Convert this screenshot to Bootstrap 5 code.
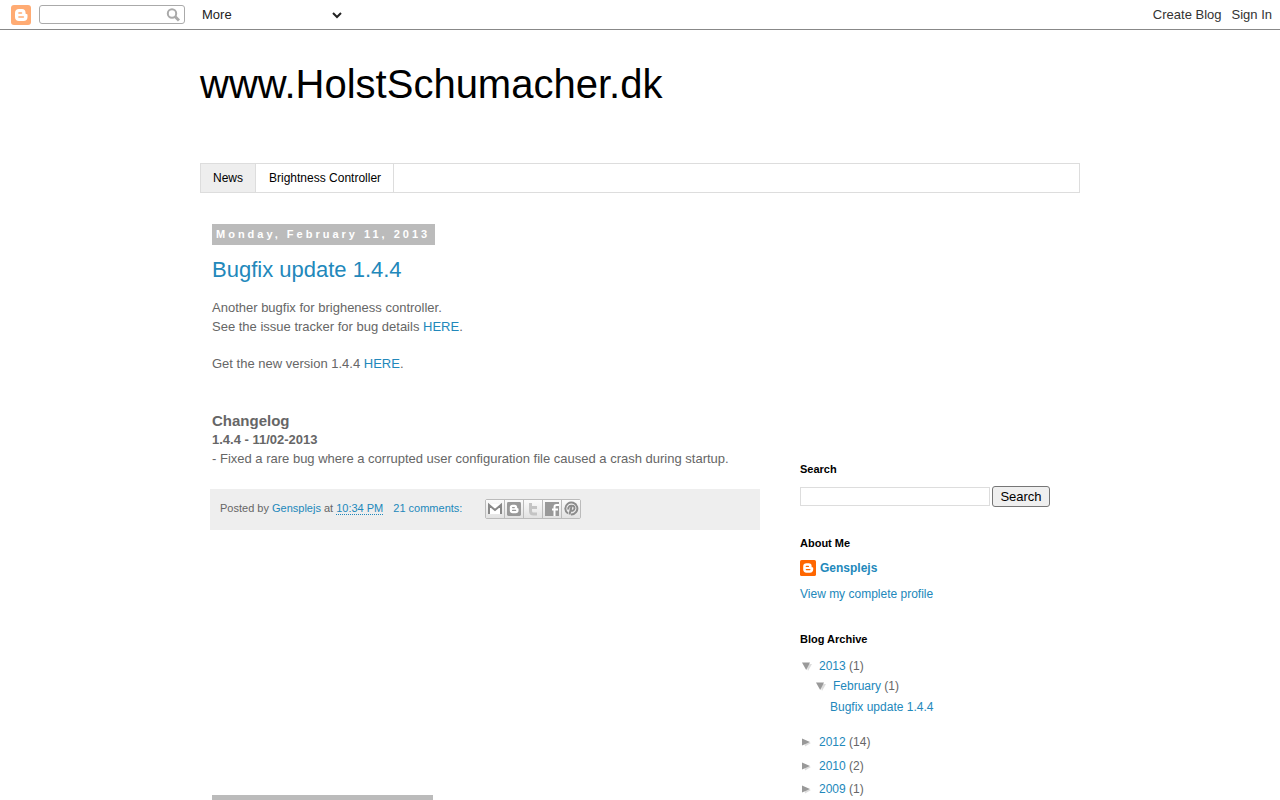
<!DOCTYPE html>
<html lang="en">
<head>
<meta charset="utf-8">
<meta name="viewport" content="width=device-width, initial-scale=1">
<title>www.HolstSchumacher.dk</title>
<link href="https://cdn.jsdelivr.net/npm/bootstrap@5.3.0/dist/css/bootstrap.min.css" rel="stylesheet">
<style>
body{font:12px/18px "Liberation Sans",Arial,sans-serif;color:#666;background:#fff;height:100vh;overflow:hidden}
a{color:#2288bb;text-decoration:none}
a:hover{text-decoration:underline}
h1,h2,h3,h4,p,ul{margin:0}
.blogbar{height:30px;border-bottom:1px solid #888;padding:0 8px 0 11px;font-size:13px;color:#333}
.blogbar a{color:#333}
.bar-links{gap:10px}
.bar-search{width:146px;height:19px;margin-left:8px;border:1px solid #aaa;border-radius:3px}
.bar-search input{width:100%;min-width:0;height:17px;border:0;padding:0 4px;background:none;outline:0}
.bar-search button{border:0;background:none;padding:0 3px 0 0;width:22px;height:17px}
.bar-more{margin-left:13px;width:147px;border:0;background:#fff;color:#222;font-size:13px;height:20px}
.page-wrap{max-width:880px;margin:0 auto}
.blog-title{font-size:40px;line-height:48px;color:#000;padding:30px 0 55px;font-weight:400}
.tabs{border:1px solid #ddd}
.tabs a{color:#000;font-size:12px;line-height:18px;padding:5px 12px;border-right:1px solid #ddd}
.tabs a+a{padding-left:13px}
.tabs a.current{background:#eee}
.posts{padding:31px 0 0 12px;min-width:0}
.date-bar{display:table;background:#bbb;color:#fff;font-size:11px;font-weight:700;line-height:13px;letter-spacing:3px;padding:4px 5px 4px 4px;height:21px}
.post-title{font-size:22px;line-height:26px;font-weight:400;margin-top:12px}
.post-text{font-size:13px;line-height:19px;margin-top:15px}
.post-text p+p{margin-top:18px}
.post-text h4{font-size:15px;line-height:19px;font-weight:700;margin-top:38px}
.post-foot{background:#eee;height:41px;margin:21px 0 0 -2px;padding:0 10px 2px;font-size:11px}
.post-foot abbr{text-decoration:none;border-bottom:1px dotted #2288bb;cursor:pointer;display:inline-block;line-height:12px}
.comments{margin:0 0 2px 10px}
.byline{margin-bottom:2px}
.share{margin-left:23px;border:1px solid #bbb;border-radius:2px}
.share a{width:19px;height:18px;border-right:1px solid #bbb;background:linear-gradient(#fbfbfb,#e2e2e2);display:flex;align-items:center;justify-content:center}
.share a:last-child{width:18px;border-right:0}
.next-post{margin-top:265px;width:221px}
.side{width:320px;padding:270px 30px 0 40px}
.side h2{font-size:11px;line-height:13px;font-weight:700;color:#000}
.side-search{margin-top:10px;gap:2px}
.side-search input{width:190px;height:19px;border:1px solid #ddd;padding:0 3px;border-radius:0}
.side-search button{width:58px;height:21px;font-size:13px;line-height:15px;padding:1px 0;color:#000;background:#efefef;border:1px solid #767676;border-radius:3px}
.about{margin-top:30px}
.author{gap:4px;margin-top:9px}
.profile{margin-top:8px}
.archive{margin-top:30px}
.archive>ul{margin-top:11px}
.toggle{width:19px;flex:none;display:flex;align-items:center}
.months{padding-left:14px;margin-top:2px}
.entries{padding-left:16px;margin:3px 0 17px}
.year+.year{margin-top:6px}
.year:last-child{margin-top:5px}
</style>
</head>
<body>
<svg width="0" height="0" class="position-absolute" aria-hidden="true">
<symbol id="blogger" viewBox="0 0 20 20"><path fill="#fff" fill-rule="evenodd" d="M8 4h3c2.300 0 3.500 1.500 3.500 3.200v.8c0 .8.400 1 1 1 .6 0 1 .300 1 .900V12c0 2.500-1.500 4-4 4H8c-2.500 0-4-1.500-4-4V8c0-2.500 1.500-4 4-4zm0 3.200c-.6 0-.9.400-.9.800s.3.800.9.800h2.400c.6 0 .9-.4.900-.8s-.3-.8-.9-.8zm0 4c-.6 0-.9.400-.9.800s.3.800.9.800h4.300c.6 0 .9-.4.900-.8s-.3-.8-.9-.8z"/></symbol>
<symbol id="open" viewBox="0 0 12 12"><path fill="#ddd" d="M6 4h6l-4 7z"/><path fill="#999" d="M2 2.500h8L6.200 10z"/></symbol>
<symbol id="closed" viewBox="0 0 12 12"><path fill="#ddd" d="M4 5l7 2-6 3.500z"/><path fill="#999" d="M2 2.500L10 6 2 9.500z"/></symbol>
</svg>

<nav class="blogbar d-flex align-items-center" aria-label="Blog bar">
  <a href="#" aria-label="Blogger" class="d-flex"><svg width="20" height="20"><rect width="20" height="20" rx="3" fill="#ffab73"/><use href="#blogger"/></svg></a>
  <form class="bar-search d-flex">
    <input type="text" aria-label="Search this blog">
    <button type="button" aria-label="Search" class="d-flex align-items-center justify-content-center"><svg width="14" height="14" fill="none" stroke="#aaa"><circle cx="6" cy="5.500" r="4.200" stroke-width="2"/><path d="M9 8.500l4 4" stroke-width="3"/></svg></button>
  </form>
  <select class="bar-more" aria-label="More"><option>More</option></select>
  <div class="bar-links d-flex ms-auto"><a href="#">Create Blog</a><a href="#">Sign In</a></div>
</nav>

<div class="page-wrap">
  <header><h1 class="blog-title">www.HolstSchumacher.dk</h1></header>
  <nav class="tabs d-flex" aria-label="Pages">
    <a href="#" class="current" aria-current="page">News</a>
    <a href="#">Brightness Controller</a>
  </nav>

  <div class="d-flex">
    <main class="posts flex-grow-1">
      <article>
        <h2 class="date-bar">Monday, February 11, 2013</h2>
        <h3 class="post-title"><a href="#">Bugfix update 1.4.4</a></h3>
        <div class="post-text">
          <p>Another bugfix for brigheness controller.<br>See the issue tracker for bug details <a href="#">HERE</a>.</p>
          <p>Get the new version 1.4.4 <a href="#">HERE</a>.</p>
          <h4>Changelog</h4>
          <b>1.4.4 - 11/02-2013</b><br>- Fixed a rare bug where a corrupted user configuration file caused a crash during startup.
        </div>
        <footer class="post-foot d-flex align-items-center">
          <span class="byline">Posted by <a href="#">Gensplejs</a> at <a href="#"><abbr>10:34 PM</abbr></a></span>
          <a href="#" class="comments">21 comments:</a>
          <div class="share d-flex">
            <a href="#" aria-label="Email this"><svg width="16" height="14"><path fill="#fff" d="M1 2h14v10H1z"/><path fill="none" stroke="#888" stroke-width="2" d="M2 12V3l6 5 6-5v9"/></svg></a>
            <a href="#" aria-label="Blog this"><svg width="14" height="14" viewBox="0 0 20 20"><rect width="20" height="20" rx="2" fill="#999"/><use href="#blogger"/></svg></a>
            <a href="#" aria-label="Share on Twitter"><svg width="14" height="14"><path fill="none" stroke="#c4c4c4" stroke-width="3" stroke-linejoin="round" d="M4.500 1v8q0 3 3 3H11M4.500 5.500H11"/></svg></a>
            <a href="#" aria-label="Share on Facebook"><svg width="14" height="14"><path fill="#999" d="M0 0h14v14H0z"/><path fill="none" stroke="#fff" stroke-width="2" d="M9.500 14V5q0-2 2-2H14M7 7.500h6"/></svg></a>
            <a href="#" aria-label="Share on Pinterest"><svg width="16" height="16" viewBox="-1 0 16 15" fill="none" stroke="#8c8c8c" stroke-width="2"><path d="M4 12A6 6 0 1 1 7 13"/><path d="M4.500 8C3 4 10.500 2.500 10.500 6.500c0 3-3 3.500-3.500 2M7.500 5L5.500 13"/></svg></a>
          </div>
        </footer>
      </article>
      <div class="date-bar next-post"></div>
    </main>

    <aside class="side flex-shrink-0">
      <section>
        <h2 id="search-title">Search</h2>
        <form class="side-search d-flex align-items-center">
          <input type="text" aria-labelledby="search-title"><button type="button">Search</button>
        </form>
      </section>
      <section class="about">
        <h2>About Me</h2>
        <a href="#" class="author d-flex align-items-center fw-bold"><svg width="16" height="16" viewBox="0 0 20 20"><rect width="20" height="20" rx="2" fill="#f60"/><use href="#blogger"/></svg>Gensplejs</a>
        <a href="#" class="profile d-block">View my complete profile</a>
      </section>
      <section class="archive">
        <h2>Blog Archive</h2>
        <ul class="list-unstyled">
          <li class="year"><div class="d-flex"><a href="#" class="toggle" aria-label="Collapse 2013"><svg width="12" height="12"><use href="#open"/></svg></a><span><a href="#">2013</a> (1)</span></div>
            <ul class="list-unstyled months">
              <li><div class="d-flex"><a href="#" class="toggle" aria-label="Collapse February"><svg width="12" height="12"><use href="#open"/></svg></a><span><a href="#">February</a> (1)</span></div>
                <ul class="list-unstyled entries"><li><a href="#">Bugfix update 1.4.4</a></li></ul>
              </li>
            </ul>
          </li>
          <li class="year d-flex"><a href="#" class="toggle" aria-label="Expand 2012"><svg width="12" height="12"><use href="#closed"/></svg></a><span><a href="#">2012</a> (14)</span></li>
          <li class="year d-flex"><a href="#" class="toggle" aria-label="Expand 2010"><svg width="12" height="12"><use href="#closed"/></svg></a><span><a href="#">2010</a> (2)</span></li>
          <li class="year d-flex"><a href="#" class="toggle" aria-label="Expand 2009"><svg width="12" height="12"><use href="#closed"/></svg></a><span><a href="#">2009</a> (1)</span></li>
        </ul>
      </section>
    </aside>
  </div>
</div>
<script src="https://cdn.jsdelivr.net/npm/bootstrap@5.3.0/dist/js/bootstrap.bundle.min.js"></script>
</body>
</html>
